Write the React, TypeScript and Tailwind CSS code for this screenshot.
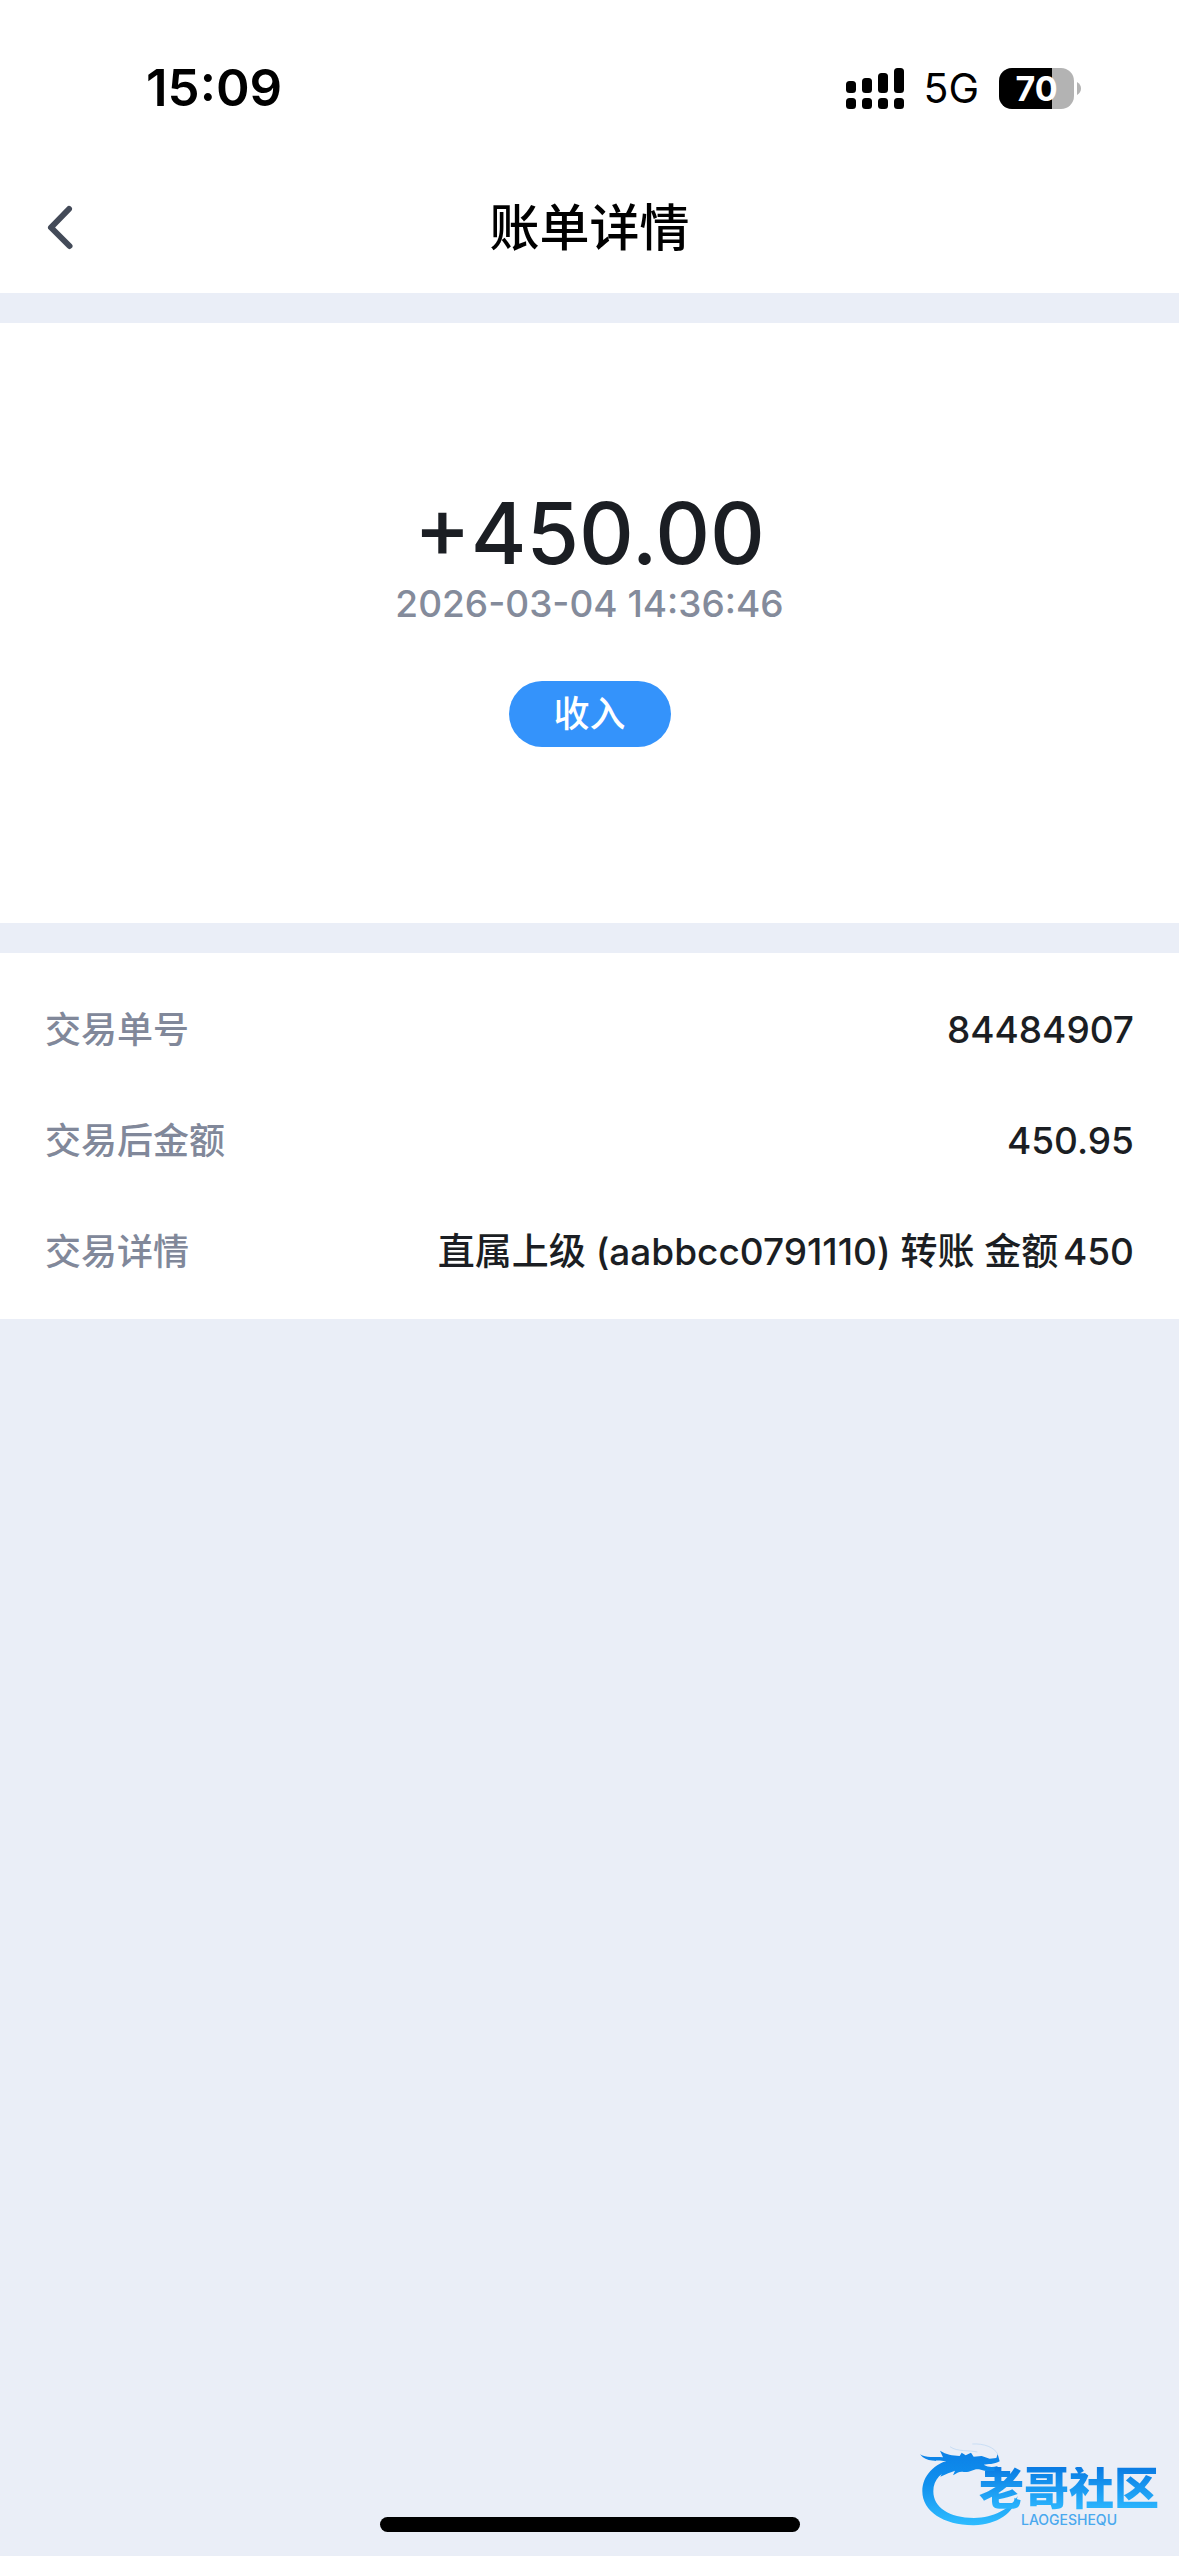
const details = [
  { label: '交易单号', value: '84484907' },
  { label: '交易后金额', value: '450.95' },
  { label: '交易详情', value: '直属上级 (aabbcc0791110) 转账 金额450' },
];

function SignalIcon() {
  const bars = [
    { x: 0, y: 13 },
    { x: 16, y: 10 },
    { x: 32, y: 5 },
    { x: 48, y: 0 },
  ];
  return (
    <svg width="58" height="41" viewBox="0 0 58 41" aria-hidden="true">
      {bars.map((b) => (
        <g key={b.x}>
          <rect x={b.x} y={b.y} width="10" height={25 - b.y} rx="3.5" />
          <rect x={b.x} y="30" width="10" height="11" rx="3.5" />
        </g>
      ))}
    </svg>
  );
}

function Battery() {
  return (
    <div className="flex items-center gap-[3px]">
      <div className="relative flex h-[41px] w-[75px] items-center justify-center overflow-hidden rounded-[13px] bg-[#b3b3b3]">
        <div className="absolute inset-y-0 left-0 w-[53px] bg-black" />
        <span className="relative text-[34px] leading-[41px] font-bold text-white">70</span>
      </div>
      <svg width="4" height="13" viewBox="0 0 4 13" aria-hidden="true">
        <path d="M0 0C2.5 1.5 4 3.8 4 6.5S2.5 11.500 0 13Z" fill="#b3b3b3" />
      </svg>
    </div>
  );
}

function BrandMark() {
  return (
    <div className="absolute right-[20px] bottom-[29px] flex items-start">
      <svg width="100" height="87" viewBox="50 30 300 261" aria-hidden="true">
        <defs>
          <linearGradient id="dragon" gradientUnits="userSpaceOnUse" x1="0" y1="60" x2="0" y2="285">
            <stop offset="0" stopColor="#0b80e6" />
            <stop offset="0.45" stopColor="#1090ee" />
            <stop offset="1" stopColor="#2fbcff" />
          </linearGradient>
        </defs>
        <g fill="url(#dragon)">
          <path d="M150 88C95 100 60 138 60 184C60 244 125 287 215 286C285 284 336 248 346 198C325 236 275 263 215 264C140 264 93 232 93 184C93 148 118 122 158 116Z" />
          <path d="M53 73C72 84 95 80 122 82L113 62C132 74 150 76 172 78L178 68L190 76L206 68L214 80L238 78L262 86L282 84L286 72L292 94C276 104 256 102 244 104C258 112 270 112 286 108L280 122C262 128 246 122 230 118C212 116 204 128 184 126C170 124 164 130 152 136L158 122C146 126 130 132 114 140L136 94C104 92 72 98 53 73Z" />
        </g>
        <path d="M143 50C165 66 200 60 225 66M210 42C245 40 276 52 286 72" fill="none" stroke="#c9def5" strokeWidth="3" />
      </svg>
      <div className="-ml-[40px] flex flex-col pt-[27px]">
        <span className="bg-linear-to-b from-[#0a7ae2] to-[#2db8ff] bg-clip-text text-[45px] leading-[44px] font-black text-transparent">
          老哥社区
        </span>
        <span className="self-center pt-[2px] text-[14px] leading-[14px] font-medium text-[#49a8ee]">LAOGESHEQU</span>
      </div>
    </div>
  );
}

export default function App() {
  return (
    <div className="relative flex min-h-screen flex-col bg-[#eaeef7] font-['Inter','Noto_Sans_CJK_SC',sans-serif] text-[#1b1e23]">
      <header className="bg-white text-black">
        <div className="flex h-[161px] items-center justify-between pt-[15px] pr-[98px] pl-[146px]">
          <time className="text-[51px] leading-[60px] font-semibold">15:09</time>
          <div className="flex items-center">
            <SignalIcon />
            <span className="mr-[20px] ml-[19px] text-[41px] leading-[50px]">5G</span>
            <Battery />
          </div>
        </div>
        <nav className="grid h-[132px] grid-cols-[1fr_auto_1fr] items-center px-[45px] pt-[2px]">
          <button type="button" aria-label="返回" className="justify-self-start">
            <svg width="30" height="48" viewBox="0 0 30 48" fill="none" aria-hidden="true">
              <path d="M24 5L6 23.500L24.500 42" stroke="#434a58" strokeWidth="6" strokeLinecap="round" strokeLinejoin="round" />
            </svg>
          </button>
          <h1 className="text-[50px] leading-[60px] font-medium">账单详情</h1>
        </nav>
      </header>

      <section className="mt-[30px] flex flex-col items-center bg-white pt-[159px] pb-[176px]">
        <p className="text-[85px] leading-[104px] font-medium">+450.00</p>
        <time className="text-[37px] leading-[35px] font-medium text-[#848b9b]">2026-03-04 14:36:46</time>
        <span className="mt-[60px] flex h-[66px] w-[162px] items-center justify-center rounded-[33px] bg-[#3493fb] text-[36px] font-medium text-white">
          收入
        </span>
      </section>

      <dl className="mt-[30px] bg-white px-[45px] pt-[21px] pb-3 font-medium">
        {details.map((d) => (
          <div key={d.label} className="flex h-[111px] items-center justify-between">
            <dt className="text-[36px] text-[#81889a]">{d.label}</dt>
            <dd className="text-[37px] [text-autospace:normal]">{d.value}</dd>
          </div>
        ))}
      </dl>

      <div className="mt-auto mb-[24px] h-[15px] w-[420px] self-center rounded-full bg-black" />
      <BrandMark />
    </div>
  );
}
